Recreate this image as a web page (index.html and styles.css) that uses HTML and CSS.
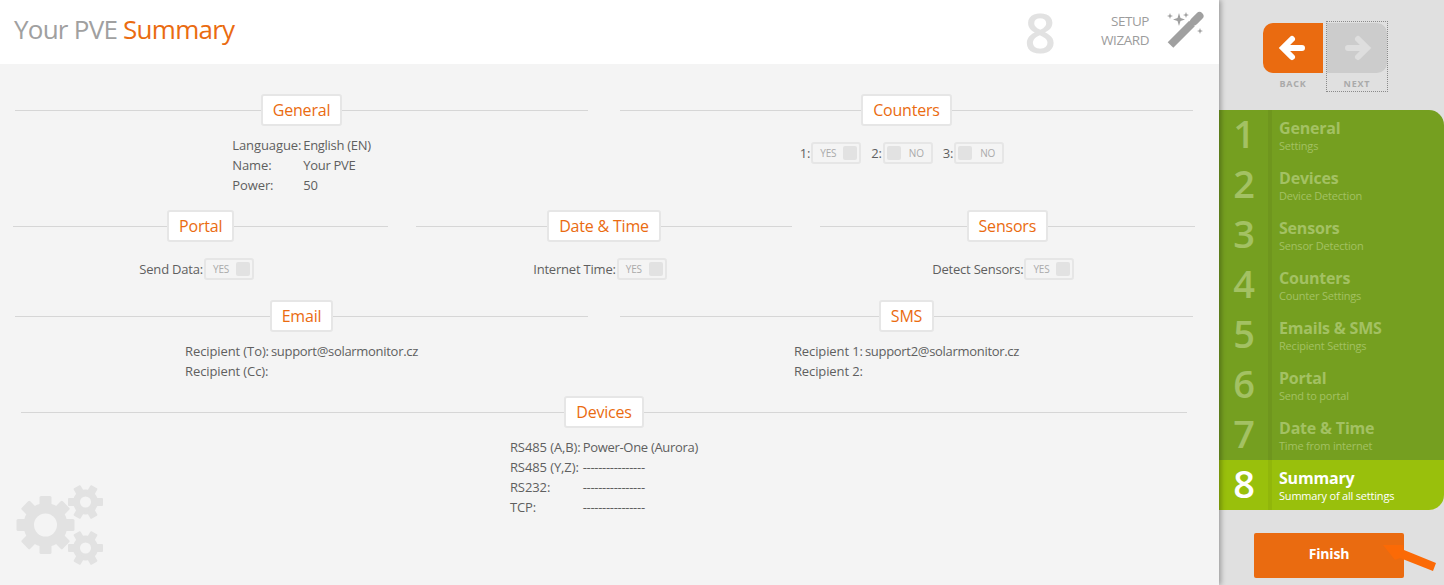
FILE: index.html
```html
<!DOCTYPE html>
<html lang="en">
<head>
<meta charset="utf-8">
<title>Your PVE Summary</title>
<link rel="stylesheet" href="styles.css">
</head>
<body>
<div class="app">
  <main class="main">
    <header class="top">
      <h1 class="title">Your PVE <span class="accent">Summary</span></h1>
      <div class="big-step">8</div>
      <div class="wizard-label">SETUP<br>WIZARD</div>
      <svg class="wand" width="38" height="38" viewBox="0 0 38 38">
        <path d="M4.500 34 L26 12.500" stroke="#a0a0a0" stroke-width="8"/>
        <path d="M28 10.500 L33.500 5" stroke="#a0a0a0" stroke-width="8" stroke-linecap="round"/>
        <path d="M13 2 L14.500 7 L19 8.500 L14.500 10 L13 15 L11.500 10 L7 8.500 L11.500 7Z M4 2 L4.800 4.200 L7 5 L4.800 5.800 L4 8 L3.200 5.800 L1 5 L3.200 4.200Z M20 1 L20.800 3.200 L23 4 L20.800 4.800 L20 7 L19.200 4.800 L17 4 L19.200 3.200Z M34 17 L34.800 19.200 L37 20 L34.800 20.800 L34 23 L33.200 20.800 L31 20 L33.200 19.200Z" fill="#a0a0a0"/>
      </svg>
    </header>
    <div class="content">
      <div class="row row-two row-first">
        <section class="sec">
          <div class="head"><h2 class="tag">General</h2></div>
          <div class="kv">
            <span>Languague:</span><span>English (EN)</span>
            <span>Name:</span><span>Your PVE</span>
            <span>Power:</span><span>50</span>
          </div>
        </section>
        <section class="sec">
          <div class="head"><h2 class="tag">Counters</h2></div>
          <div class="inline counters">
            <span class="pair">1:<span class="toggle"><span class="tx">YES</span><i class="knob"></i></span></span>
            <span class="pair">2:<span class="toggle"><i class="knob"></i><span class="tx">NO</span></span></span>
            <span class="pair">3:<span class="toggle"><i class="knob"></i><span class="tx">NO</span></span></span>
          </div>
        </section>
      </div>
      <div class="row row-three">
        <section class="sec">
          <div class="head"><h2 class="tag">Portal</h2></div>
          <div class="inline"><span class="pair">Send Data:<span class="toggle"><span class="tx">YES</span><i class="knob"></i></span></span></div>
        </section>
        <section class="sec">
          <div class="head"><h2 class="tag">Date &amp; Time</h2></div>
          <div class="inline"><span class="pair">Internet Time:<span class="toggle"><span class="tx">YES</span><i class="knob"></i></span></span></div>
        </section>
        <section class="sec">
          <div class="head"><h2 class="tag">Sensors</h2></div>
          <div class="inline"><span class="pair">Detect Sensors:<span class="toggle"><span class="tx">YES</span><i class="knob"></i></span></span></div>
        </section>
      </div>
      <div class="row row-two row-mail">
        <section class="sec">
          <div class="head"><h2 class="tag">Email</h2></div>
          <div class="kv">
            <span>Recipient (To):</span><span>support@solarmonitor.cz</span>
            <span>Recipient (Cc):</span><span></span>
          </div>
        </section>
        <section class="sec">
          <div class="head"><h2 class="tag">SMS</h2></div>
          <div class="kv">
            <span>Recipient 1:</span><span>support2@solarmonitor.cz</span>
            <span>Recipient 2:</span><span></span>
          </div>
        </section>
      </div>
      <div class="row row-one">
        <section class="sec">
          <div class="head"><h2 class="tag">Devices</h2></div>
          <div class="kv">
            <span>RS485 (A,B):</span><span>Power-One (Aurora)</span>
            <span>RS485 (Y,Z):</span><span>----------------</span>
            <span>RS232:</span><span>----------------</span>
            <span>TCP:</span><span>----------------</span>
          </div>
        </section>
      </div>
      <svg class="gears" width="100" height="90" viewBox="0 0 100 90">
        <defs>
          <g id="t8"><rect x="-6" y="-29" width="12" height="12" rx="1.500"/></g>
          <g id="t6"><rect x="-4" y="-17.500" width="8" height="9" rx="1"/></g>
        </defs>
        <g fill="#e2e2e2" transform="translate(30.500 49)">
          <path fill-rule="evenodd" d="M-22 0a22 22 0 1 0 44 0a22 22 0 1 0-44 0Z M-11.500 0a11.500 11.500 0 1 1 23 0a11.500 11.500 0 1 1-23 0Z"/>
          <use href="#t8"/><use href="#t8" transform="rotate(45)"/><use href="#t8" transform="rotate(90)"/><use href="#t8" transform="rotate(135)"/><use href="#t8" transform="rotate(180)"/><use href="#t8" transform="rotate(225)"/><use href="#t8" transform="rotate(270)"/><use href="#t8" transform="rotate(315)"/>
        </g>
        <g fill="#e2e2e2" transform="translate(70.500 26)">
          <path fill-rule="evenodd" d="M-12.500 0a12.500 12.500 0 1 0 25 0a12.500 12.500 0 1 0-25 0Z M-5.500 0a5.500 5.500 0 1 1 11 0a5.500 5.500 0 1 1-11 0Z"/>
          <use href="#t6" transform="rotate(30)"/><use href="#t6" transform="rotate(90)"/><use href="#t6" transform="rotate(150)"/><use href="#t6" transform="rotate(210)"/><use href="#t6" transform="rotate(270)"/><use href="#t6" transform="rotate(330)"/>
        </g>
        <g fill="#e2e2e2" transform="translate(70.500 72)">
          <path fill-rule="evenodd" d="M-12.500 0a12.500 12.500 0 1 0 25 0a12.500 12.500 0 1 0-25 0Z M-5.500 0a5.500 5.500 0 1 1 11 0a5.500 5.500 0 1 1-11 0Z"/>
          <use href="#t6" transform="rotate(30)"/><use href="#t6" transform="rotate(90)"/><use href="#t6" transform="rotate(150)"/><use href="#t6" transform="rotate(210)"/><use href="#t6" transform="rotate(270)"/><use href="#t6" transform="rotate(330)"/>
        </g>
      </svg>
    </div>
  </main>
  <aside class="side">
    <div class="nav">
      <div class="nav-item">
        <div class="nav-btn back">
          <svg width="30" height="30" viewBox="0 0 30 30"><path d="M24 15H6M14 6L5 15L14 24" fill="none" stroke="#fff" stroke-width="6" stroke-linecap="round" stroke-linejoin="miter"/></svg>
        </div>
        <span class="nav-label">BACK</span>
      </div>
      <div class="nav-item next-item">
        <div class="nav-btn next">
          <svg width="30" height="30" viewBox="0 0 30 30"><path d="M6 15H24M16 6L25 15L16 24" fill="none" stroke="#dedede" stroke-width="6" stroke-linecap="round" stroke-linejoin="miter"/></svg>
        </div>
        <span class="nav-label">NEXT</span>
      </div>
    </div>
    <ol class="steps">
      <li class="step"><span class="num">1</span><div class="info"><b>General</b><small>Settings</small></div></li>
      <li class="step"><span class="num">2</span><div class="info"><b>Devices</b><small>Device Detection</small></div></li>
      <li class="step"><span class="num">3</span><div class="info"><b>Sensors</b><small>Sensor Detection</small></div></li>
      <li class="step"><span class="num">4</span><div class="info"><b>Counters</b><small>Counter Settings</small></div></li>
      <li class="step"><span class="num">5</span><div class="info"><b>Emails &amp; SMS</b><small>Recipient Settings</small></div></li>
      <li class="step"><span class="num">6</span><div class="info"><b>Portal</b><small>Send to portal</small></div></li>
      <li class="step"><span class="num">7</span><div class="info"><b>Date &amp; Time</b><small>Time from internet</small></div></li>
      <li class="step active"><span class="num">8</span><div class="info"><b>Summary</b><small>Summary of all settings</small></div></li>
    </ol>
    <div class="finish-wrap">
      <button class="finish">Finish</button>
      <svg class="pointer" width="54" height="27" viewBox="0 0 54 27"><path d="M0 0L20 0L21 5L53 18L50 26L17 13L12 15Z" fill="#fb6a06"/></svg>
    </div>
  </aside>
</div>
</body>
</html>
```
FILE: styles.css
```css
* { box-sizing: border-box; }
html, body { margin: 0; padding: 0; height: 585px; overflow: hidden; }
body { font-family: "Open Sans", "Noto Sans", sans-serif; color: #5f5f5f; font-size: 13px; }
.app { display: flex; width: 1444px; height: 585px; background: #e0e0e0; }

.main { width: 1219px; height: 585px; display: flex; flex-direction: column; background: #f4f4f4; box-shadow: 2px 0 5px rgba(0,0,0,.3); position: relative; z-index: 2; }
.top { height: 64px; background: #fff; display: flex; align-items: center; padding: 0 15px 0 14px; }
.title { margin: 0 0 6px; font-weight: 400; font-size: 26px; color: #a0a0a0; letter-spacing: -.75px; flex: 1; }
.accent { color: #ea6b10; }
.big-step { font-size: 55px; color: #e2e2e2; font-weight: 600; line-height: 64px; margin-right: 45px; }
.wizard-label { font-size: 13.500px; line-height: 19px; color: #9c9c9c; text-align: right; margin: 0 17px 2px 0; letter-spacing: -.45px; }
.wand { margin-top: -4px; }

.content { flex: 1; position: relative; padding-top: 30px; }
.row { display: flex; }
.row-two { gap: 32px; padding: 0 26px 0 15px; }
.row-first { height: 116px; }
.row-three { gap: 28px; padding: 0 24px 0 13px; height: 90px; }
.row-mail { height: 96px; }
.row-one { padding: 0 32px 0 21px; }
.sec { flex: 1 1 0; min-width: 0; }
.head { display: flex; align-items: center; gap: 0; height: 32px; }
.head::before, .head::after { content: ""; flex: 1; height: 1px; background: #d6d6d6; }
.tag { margin: 0; font-weight: 400; font-size: 16px; line-height: 28px; height: 32px; padding: 0 10px; color: #ea6b10; background: #fff; border: 2px solid #e6e6e6; border-radius: 3px; letter-spacing: -.2px; }

.kv { display: grid; grid-template-columns: auto auto; justify-content: center; column-gap: 2px; margin-top: 9px; line-height: 20px; letter-spacing: -.3px; }
.kv span:nth-child(odd) { letter-spacing: -.1px; }
.inline { display: flex; justify-content: center; gap: 10px; margin-top: 16px; padding-right: 8px; letter-spacing: -.2px; }
.counters { padding-right: 9px; }
.pair { display: flex; align-items: center; gap: 1px; }
.toggle { display: inline-flex; align-items: center; justify-content: space-between; width: 50px; height: 22px; border: 2px solid #e6e6e6; border-radius: 3px; padding: 0 2px 0 7px; font-size: 10px; color: #aaa; }
.toggle .knob:first-child { margin-left: -5px; }
.toggle .knob:first-child + .tx { margin-right: 5px; }
.knob { width: 14px; height: 14px; background: #e2e2e2; border-radius: 2px; }

.gears { position: absolute; left: 15px; bottom: 19px; }

.side { width: 225px; display: flex; flex-direction: column; }
.nav { display: flex; justify-content: flex-start; padding: 23px 0 0 44px; height: 110px; gap: 4px; }
.nav-item { width: 60px; display: flex; flex-direction: column; align-items: center; }
.next-item { outline: 1px dotted #8a8a8a; outline-offset: 0; height: 69px; margin-top: -1px; padding-top: 1px; }
.nav-btn { width: 60px; height: 50px; display: flex; align-items: center; justify-content: center; }
.back { background: #ea6b10; border-radius: 10px 0 0 10px; }
.next { background: #cccccc; border-radius: 0 10px 10px 0; }
.nav-label { font-size: 9px; font-weight: 700; color: #aaa; letter-spacing: .8px; margin-top: 5px; line-height: 12px; }

.steps { list-style: none; margin: 0; padding: 0; height: 400px; }
.step { height: 50px; display: flex; background: #759f20; color: #a3c163; }
.step:first-child { border-top-right-radius: 15px; }
.active { background: #99c00c; color: #fff; border-bottom-right-radius: 15px; }
.num { width: 53px; border-right: 4px solid rgba(0,0,0,.05); font-size: 38px; font-weight: 600; line-height: 47px; text-align: center; padding-left: 1px; }
.info { padding: 8px 0 0 7px; display: flex; flex-direction: column; }
.info b { font-size: 16px; line-height: 20px; letter-spacing: -.2px; font-weight: 700; }
.info small { font-size: 11px; line-height: 15px; letter-spacing: -.2px; }

.finish-wrap { position: relative; padding: 23px 0 0 35px; }
.finish { width: 150px; height: 45px; border: 0; border-radius: 2px; background: #ea6b10; color: #fff; font: 700 14px/40px "Open Sans", "Noto Sans", sans-serif; letter-spacing: -.2px; padding: 0 0 3px; }
.pointer { position: absolute; left: 164px; top: 35px; }
```
